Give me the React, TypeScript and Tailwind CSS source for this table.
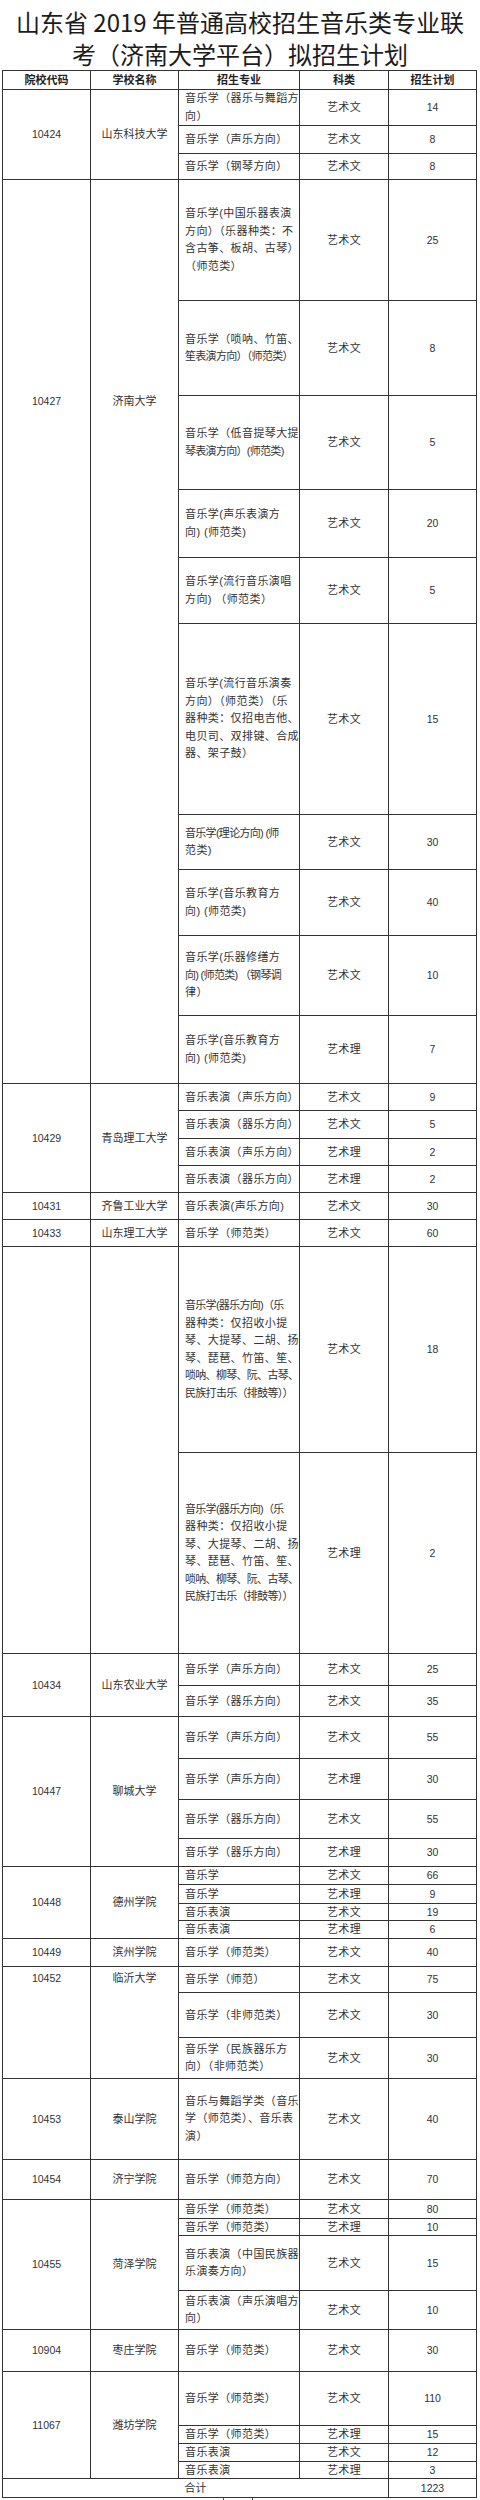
import clsx from "clsx";

type Lead = {
  code: string;
  school: string;
  span: number;
  top?: boolean;
  openTop?: boolean;
  openBottom?: boolean;
};

type Row = { lead?: Lead; p: string[]; k: string; n: string; h: string };

const rows: Row[] = [
  { lead: { code: "10424", school: "山东科技大学", span: 3 }, p: ["音乐学（器乐与舞蹈方", "向）"], k: "艺术文", n: "14", h: "h-[35px]" },
  { p: ["音乐学（声乐方向）"], k: "艺术文", n: "8", h: "h-[28px]" },
  { p: ["音乐学（钢琴方向）"], k: "艺术文", n: "8", h: "h-[26px]" },

  { lead: { code: "10427", school: "济南大学", span: 5, openBottom: true }, p: ["音乐学(中国乐器表演", "方向）（乐器种类：不", "含古筝、板胡、古琴）", "（师范类）"], k: "艺术文", n: "25", h: "h-[121px]" },
  { p: ["音乐学（唢呐、竹笛、", "笙表演方向）（师范类）"], k: "艺术文", n: "8", h: "h-[95px]" },
  { p: ["音乐学（低音提琴大提", "琴表演方向）(师范类)"], k: "艺术文", n: "5", h: "h-[94px]" },
  { p: ["音乐学(声乐表演方", "向) (师范类)"], k: "艺术文", n: "20", h: "h-[68px]" },
  { p: ["音乐学(流行音乐演唱", "方向) （师范类）"], k: "艺术文", n: "5", h: "h-[66px]" },
  { lead: { code: "", school: "", span: 5, openTop: true }, p: ["音乐学(流行音乐演奏", "方向）（师范类）（乐", "器种类：仅招电吉他、", "电贝司、双排键、合成", "器、架子鼓）"], k: "艺术文", n: "15", h: "h-[191px]" },
  { p: ["音乐学(理论方向) (师", "范类)"], k: "艺术文", n: "30", h: "h-[55px]" },
  { p: ["音乐学(音乐教育方", "向) (师范类)"], k: "艺术文", n: "40", h: "h-[66px]" },
  { p: ["音乐学(乐器修缮方", "向) (师范类) （钢琴调", "律）"], k: "艺术文", n: "10", h: "h-[80px]" },
  { p: ["音乐学(音乐教育方", "向) (师范类)"], k: "艺术理", n: "7", h: "h-[68px]" },

  { lead: { code: "10429", school: "青岛理工大学", span: 4 }, p: ["音乐表演（声乐方向）"], k: "艺术文", n: "9", h: "h-[27px]" },
  { p: ["音乐表演（器乐方向）"], k: "艺术文", n: "5", h: "h-[28px]" },
  { p: ["音乐表演（声乐方向）"], k: "艺术理", n: "2", h: "h-[27px]" },
  { p: ["音乐表演（器乐方向）"], k: "艺术理", n: "2", h: "h-[27px]" },

  { lead: { code: "10431", school: "齐鲁工业大学", span: 1 }, p: ["音乐表演(声乐方向)"], k: "艺术文", n: "30", h: "h-[27px]" },
  { lead: { code: "10433", school: "山东理工大学", span: 1 }, p: ["音乐学（师范类）"], k: "艺术文", n: "60", h: "h-[27px]" },

  { lead: { code: "", school: "", span: 2 }, p: ["音乐学(器乐方向)（乐", "器种类：仅招收小提", "琴、大提琴、二胡、扬", "琴、琵琶、竹笛、笙、", "唢呐、柳琴、阮、古琴、", "民族打击乐（排鼓等））"], k: "艺术文", n: "18", h: "h-[206px]" },
  { p: ["音乐学(器乐方向)（乐", "器种类：仅招收小提", "琴、大提琴、二胡、扬", "琴、琵琶、竹笛、笙、", "唢呐、柳琴、阮、古琴、", "民族打击乐（排鼓等））"], k: "艺术理", n: "2", h: "h-[201px]" },

  { lead: { code: "10434", school: "山东农业大学", span: 2 }, p: ["音乐学（声乐方向）"], k: "艺术文", n: "25", h: "h-[32px]" },
  { p: ["音乐学（器乐方向）"], k: "艺术文", n: "35", h: "h-[31px]" },

  { lead: { code: "10447", school: "聊城大学", span: 4 }, p: ["音乐学（声乐方向）"], k: "艺术文", n: "55", h: "h-[42px]" },
  { p: ["音乐学（声乐方向）"], k: "艺术理", n: "30", h: "h-[41px]" },
  { p: ["音乐学（器乐方向）"], k: "艺术文", n: "55", h: "h-[39px]" },
  { p: ["音乐学（器乐方向）"], k: "艺术理", n: "30", h: "h-[28px]" },

  { lead: { code: "10448", school: "德州学院", span: 4 }, p: ["音乐学"], k: "艺术文", n: "66", h: "h-[18px]" },
  { p: ["音乐学"], k: "艺术理", n: "9", h: "h-[19px]" },
  { p: ["音乐表演"], k: "艺术文", n: "19", h: "h-[17px]" },
  { p: ["音乐表演"], k: "艺术理", n: "6", h: "h-[18px]" },

  { lead: { code: "10449", school: "滨州学院", span: 1 }, p: ["音乐学（师范类）"], k: "艺术文", n: "40", h: "h-[28px]" },

  { lead: { code: "10452", school: "临沂大学", span: 3, top: true }, p: ["音乐学（师范）"], k: "艺术文", n: "75", h: "h-[26px]" },
  { p: ["音乐学（非师范类）"], k: "艺术文", n: "30", h: "h-[45px]" },
  { p: ["音乐学（民族器乐方", "向）（非师范类）"], k: "艺术文", n: "30", h: "h-[41px]" },

  { lead: { code: "10453", school: "泰山学院", span: 1 }, p: ["音乐与舞蹈学类（音乐", "学（师范类）、音乐表", "演）"], k: "艺术文", n: "40", h: "h-[81px]" },
  { lead: { code: "10454", school: "济宁学院", span: 1 }, p: ["音乐学（师范方向）"], k: "艺术文", n: "70", h: "h-[40px]" },

  { lead: { code: "10455", school: "菏泽学院", span: 4 }, p: ["音乐学（师范类）"], k: "艺术文", n: "80", h: "h-[19px]" },
  { p: ["音乐学（师范类）"], k: "艺术理", n: "10", h: "h-[17px]" },
  { p: ["音乐表演（中国民族器", "乐演奏方向）"], k: "艺术文", n: "15", h: "h-[55px]" },
  { p: ["音乐表演（声乐演唱方", "向）"], k: "艺术文", n: "10", h: "h-[39px]" },

  { lead: { code: "10904", school: "枣庄学院", span: 1 }, p: ["音乐学（师范类）"], k: "艺术文", n: "30", h: "h-[42px]" },

  { lead: { code: "11067", school: "潍坊学院", span: 4 }, p: ["音乐学（师范类）"], k: "艺术文", n: "110", h: "h-[54px]" },
  { p: ["音乐学（师范类）"], k: "艺术理", n: "15", h: "h-[18px]" },
  { p: ["音乐表演"], k: "艺术文", n: "12", h: "h-[18px]" },
  { p: ["音乐表演"], k: "艺术理", n: "3", h: "h-[17px]" },
];

const heads = ["院校代码", "学校名称", "招生专业", "科类", "招生计划"];

const cell = "border border-[#333] p-0";

export default function App() {
  return (
    <div className="w-[480px] bg-white pb-[4px] text-[#333] font-['Liberation_Sans','Noto_Sans_CJK_SC',sans-serif]">
      <h1 className="pt-[6px] text-center text-[24px] font-normal leading-[32px] text-[#1c1c1c] font-['Noto_Sans_CJK_SC',sans-serif]">
        <span className="block whitespace-nowrap">山东省 2019 年普通高校招生音乐类专业联</span>
        <span className="block">考（济南大学平台）拟招生计划</span>
      </h1>

      <table className="ml-[2px] w-[475px] table-fixed border-collapse">
        <colgroup>
          <col className="w-[88px]" />
          <col className="w-[88px]" />
          <col className="w-[121px]" />
          <col className="w-[89px]" />
          <col className="w-[88px]" />
        </colgroup>
        <thead>
          <tr className="h-[19px]">
            {heads.map((h) => (
              <th key={h} className={clsx(cell, "text-center text-[11px] font-bold leading-[15px] text-[#222]")}>
                {h}
              </th>
            ))}
          </tr>
        </thead>
        <tbody>
          {rows.map((r, i) => {
            const lead = r.lead;
            const leadCls = lead
              ? clsx(
                  cell,
                  "text-center leading-[15px]",
                  lead.top && "pt-[4px] align-top",
                  lead.openTop && "border-t-0",
                  lead.openBottom && "border-b-0"
                )
              : "";
            return (
              <tr key={i} className={r.h}>
                {lead && (
                  <>
                    <td rowSpan={lead.span} className={clsx(leadCls, "text-[10.5px]")}>
                      {lead.code}
                    </td>
                    <td rowSpan={lead.span} className={clsx(leadCls, "text-[11px]")}>
                      {lead.school}
                    </td>
                  </>
                )}
                <td className={clsx(cell, "pl-[6px] text-left text-[11px]", r.p.length > 1 ? "leading-[17.5px]" : "leading-[15px]")}>
                  {r.p.map((l, j) => (
                    <div
                      key={j}
                      className={clsx("whitespace-nowrap", l.length > 10 ? "tracking-[-0.7px]" : "tracking-[0.4px]")}
                    >
                      {l}
                    </div>
                  ))}
                </td>
                <td className={clsx(cell, "text-center text-[11px] leading-[15px] tracking-[0.3px]")}>{r.k}</td>
                <td className={clsx(cell, "text-center text-[10.5px] leading-[15px]")}>{r.n}</td>
              </tr>
            );
          })}
          <tr className="h-[19px]">
            <td colSpan={4} className={clsx(cell, "text-center text-[11px] leading-[15px]")}>
              合计
            </td>
            <td className={clsx(cell, "text-center text-[10.5px] leading-[15px]")}>1223</td>
          </tr>
        </tbody>
      </table>
      <div className="ml-[223px] h-[4px] w-[30px] border-x border-[#555]" />
    </div>
  );
}
